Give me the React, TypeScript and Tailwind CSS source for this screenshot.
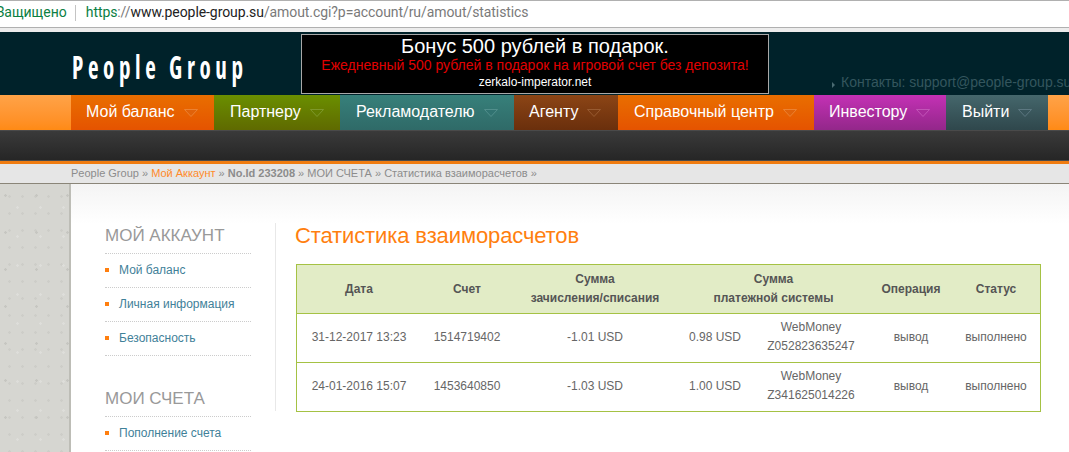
const NAV = [
  { label: "Мой баланс", w: "w-[143px] pl-[15px]", bg: "bg-gradient-to-b from-[#e96e00] to-[#e55300]", fill: "#e0620a", line: "#ee8a3e" },
  { label: "Партнеру", w: "w-[126px] pl-[16px]", bg: "bg-gradient-to-b from-[#6a8f00] to-[#5f6a00]", fill: "#637d00", line: "#85a035" },
  { label: "Рекламодателю", w: "w-[174px] pl-[16px]", bg: "bg-gradient-to-b from-[#37807a] to-[#2f6a68]", fill: "#317371", line: "#5a9693" },
  { label: "Агенту", w: "w-[104px] pl-[15px]", bg: "bg-gradient-to-b from-[#8c4516] to-[#6a2f0c]", fill: "#793a12", line: "#a0633a" },
  { label: "Справочный центр", w: "w-[196px] pl-[16px]", bg: "bg-gradient-to-b from-[#e96e00] to-[#e55300]", fill: "#e0620a", line: "#ee8a3e" },
  { label: "Инвестору", w: "w-[132px] pl-[15px]", bg: "bg-gradient-to-b from-[#c431b5] to-[#93278a]", fill: "#a82c9c", line: "#c85fbf" },
  { label: "Выйти", w: "w-[102px] pl-[16px]", bg: "bg-gradient-to-b from-[#45676c] to-[#2f474c]", fill: "#38555b", line: "#64808a" },
];

const SIDE_1 = ["Мой баланс", "Личная информация", "Безопасность"];

const ROWS = [
  { date: "31-12-2017 13:23", acc: "1514719402", sum: "-1.01 USD", pay: "0.98 USD", wallet: "Z052823635247" },
  { date: "24-01-2016 15:07", acc: "1453640850", sum: "-1.03 USD", pay: "1.00 USD", wallet: "Z341625014226" },
];

const COLS = "grid grid-cols-[124px_92px_164px_75px_118px_82px_88px]";

function SideLink({ label }: { label: string }) {
  return (
    <div className="flex h-[34px] items-center border-b border-dotted border-[#cccccc] pb-px text-[12px] text-[#3f8199]">
      <span className="mr-[10px] h-1 w-1 bg-[#ff7f0f]" />
      {label}
    </div>
  );
}

function NavArrow({ fill, line }: { fill: string; line: string }) {
  return (
    <svg width="14" height="8" viewBox="0 0 14 8" className="mt-[2px]">
      <path d="M0.5 0.5H13.5L7 7.5Z" fill={fill} stroke={line} strokeWidth="0.8" />
    </svg>
  );
}

export default function App() {
  return (
    <div className="h-[452px] w-[1069px] overflow-hidden bg-white font-['Liberation_Sans',sans-serif]">
      {/* browser address bar */}
      <div className="flex h-[28px] items-center border-y border-[#b0b0b0] pb-[3px] font-['Roboto',sans-serif] text-[14px]">
        <span className="-ml-[4px] text-[#0b8043]">Защищено</span>
        <span className="ml-[8px] mr-[10px] h-4 w-px bg-[#c4c4c4]" />
        <span className="tracking-[-0.08px] text-[#7a7a7a]">
          <span className="text-[#0b8043]">https</span>://<span className="text-[#222222]">www.people-group.su</span>/amout.cgi?p=account/ru/amout/statistics
        </span>
      </div>
      <div className="h-[4px] bg-[#ececec]" />

      {/* header */}
      <div className="flex h-[63px] bg-[#00222a]">
        <div className="ml-[72px] w-[229px] shrink-0 pt-[15px]">
          <span className="inline-block origin-left scale-x-[0.72] whitespace-nowrap font-['Open_Sans',sans-serif] text-[32px] leading-[40px] font-bold tracking-[6.4px] text-white [font-stretch:condensed]">
            People Group
          </span>
        </div>
        <div className="mt-[2px] flex h-[60px] w-[468px] shrink-0 flex-col items-center border border-[#a8a8a8] bg-black">
          <span className="text-[20px] leading-[22px] text-white">Бонус 500 рублей в подарок.</span>
          <span className="text-[14px] leading-[17px] text-[#e00000]">Ежедневный 500 рублей в подарок на игровой счет без депозита!</span>
          <span className="text-[12px] leading-[17px] text-white">zerkalo-imperator.net</span>
        </div>
        <div className="flex items-end whitespace-nowrap pb-[2px] pl-[63px] text-[14px] text-[#34565e]">
          <span className="mr-[6px] mb-[5px] h-0 w-0 border-y-[3px] border-l-[3px] border-y-transparent border-l-[#4a6b72]" />
          Контакты: support@people-group.su
        </div>
      </div>

      {/* main nav */}
      <div className="flex h-[35px] bg-gradient-to-b from-[#ffa347] to-[#ff8a14]">
        <div className="ml-[71px] flex">
          {NAV.map((n) => (
            <div key={n.label} className={`flex items-center gap-[9px] pb-[2px] text-[16px] text-white ${n.w} ${n.bg}`}>
              {n.label}
              <NavArrow fill={n.fill} line={n.line} />
            </div>
          ))}
        </div>
      </div>

      {/* dark strip */}
      <div className="h-[31px] border-y border-[#4a4a4a] bg-gradient-to-b from-[#3a3a3a] to-[#262626]" />
      <div className="h-[3px] bg-[#f07c10]" />

      {/* breadcrumbs */}
      <div className="flex h-[20px] items-center whitespace-nowrap border-b border-[#8a8578] bg-[#e6e6e6] pl-[71px] text-[11px] text-[#8c8c8c]">
        People Group »&nbsp;<span className="text-[#ff8a2a]">Мой Аккаунт</span>&nbsp;»&nbsp;<b>No.Id 233208</b>&nbsp;»&nbsp;МОИ СЧЕТА »&nbsp;Статистика взаиморасчетов »
      </div>

      {/* body */}
      <div className="flex">
        <div className="h-[268px] w-[71px] border-r-[2px] border-[#bdbdb6] bg-[#d6d6d1] bg-[radial-gradient(circle,#dededa_1px,transparent_1.5px),radial-gradient(circle,#c6c6c1_1px,transparent_1.5px),radial-gradient(circle,#cdcdc8_1px,transparent_1.5px)] bg-[length:23px_29px,31px_37px,13px_17px] bg-[position:6px_9px,21px_30px,3px_4px]" />
        <div className="flex-1 bg-gradient-to-b from-[#f4f4f4] to-white to-[40px]">
          <div className="flex pt-[40px]">
            <aside className="ml-[34px] w-[146px]">
              <h3 className="border-b border-dotted border-[#cccccc] pt-px pb-[6px] text-[17px] leading-[22px] text-[#999999]">МОЙ АККАУНТ</h3>
              {SIDE_1.map((s) => <SideLink key={s} label={s} />)}
              <h3 className="mt-[31px] border-b border-dotted border-[#cccccc] pt-px pb-[6px] text-[17px] leading-[22px] text-[#999999]">МОИ СЧЕТА</h3>
              <SideLink label="Пополнение счета" />
            </aside>
            <div className="ml-[24px] -mt-px h-[188px] w-px bg-[#e8e8e8]" />
            <main className="ml-[20px]">
              <h1 className="mb-[16px] -ml-px text-[22px] leading-[24px] tracking-[-0.12px] text-[#ff7f0f]">Статистика взаиморасчетов</h1>
              <div className="w-[745px] border border-[#a5c244] text-[12px] text-[#666666]">
                <div className={`${COLS} h-[48px] items-center bg-[#e2ecc6] text-center font-bold leading-[19px] text-[#555555]`}>
                  <span>Дата</span>
                  <span>Счет</span>
                  <span>Сумма<br />зачисления/списания</span>
                  <span className="col-span-2">Сумма<br />платежной системы</span>
                  <span>Операция</span>
                  <span>Статус</span>
                </div>
                {ROWS.map((r) => (
                  <div key={r.acc} className={`${COLS} h-[49px] items-center border-t border-[#a5c244] pb-[2px] text-center leading-[19px]`}>
                    <span>{r.date}</span>
                    <span>{r.acc}</span>
                    <span>{r.sum}</span>
                    <span className="pr-[11px] text-right">{r.pay}</span>
                    <span>WebMoney<br />{r.wallet}</span>
                    <span>вывод</span>
                    <span>выполнено</span>
                  </div>
                ))}
              </div>
            </main>
          </div>
        </div>
      </div>
    </div>
  );
}
